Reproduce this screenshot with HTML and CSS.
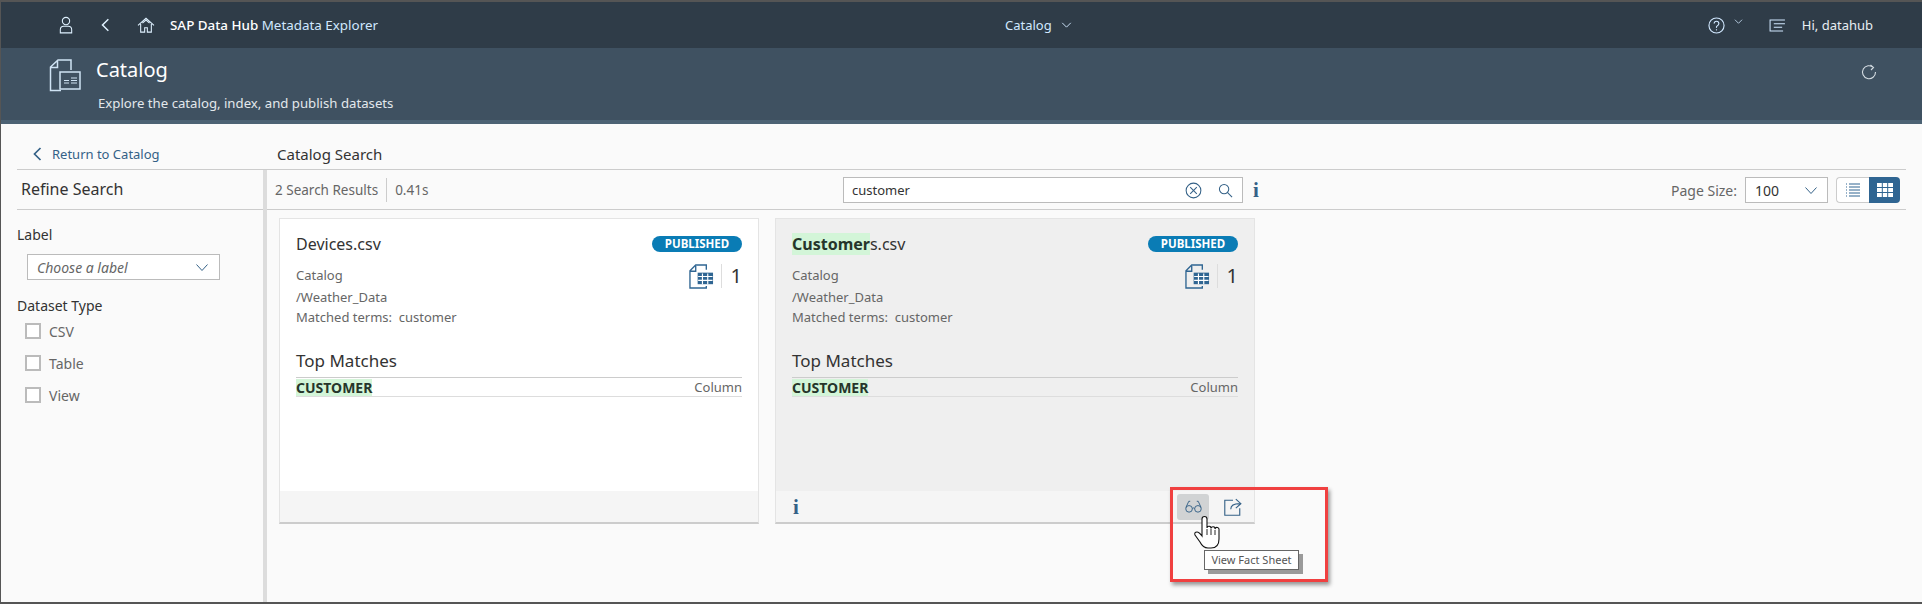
FILE: index.html
```html
<!DOCTYPE html>
<html lang="en">
<head>
    <meta charset="UTF-8">
    <title>SAP Data Hub Metadata Explorer</title>
    <link rel="stylesheet" href="styles.css">
</head>
<body>
<div class="frame">
    <header class="shell">
        <div class="shell-left">
            <svg class="shell-icon user" viewBox="0 0 16 20"><circle cx="8" cy="5.500" r="4.200"/><path d="M1.500 19v-3.500q0-4 4-4h5q4 0 4 4V19z"/></svg>
            <svg class="shell-icon back" viewBox="0 0 12 18"><path d="M10 2L3 9l7 7"/></svg>
            <svg class="shell-icon home" viewBox="0 0 20 18"><path d="M1 9.500L10 1.500l9 8M4 8v9h4.500v-5h3v5H16V8M6 7l4-3.500L14 7"/></svg>
            <span class="shell-title">SAP Data Hub <span class="accent">Metadata Explorer</span></span>
        </div>
        <div class="shell-center">
            <span>Catalog</span>
            <svg class="chev" viewBox="0 0 12 7"><path d="M1 1l5 5 5-5"/></svg>
        </div>
        <div class="shell-right">
            <svg class="help" viewBox="0 0 18 18"><circle cx="9" cy="9" r="8"/><path d="M6.500 7q0-2.500 2.500-2.500T11.500 7q0 1.500-1.500 2.200T9 11.500"/><path d="M9 13v1.200"/></svg>
            <svg class="chev small" viewBox="0 0 12 7"><path d="M1 1l5 5 5-5"/></svg>
            <svg class="notes" viewBox="0 0 18 14"><path d="M2 1H1v12h1M1 1h16M5 5h12M5 9h9M1 13h14"/></svg>
            <span class="hello">Hi, datahub</span>
        </div>
    </header>

    <section class="page-head">
        <svg class="head-icon" viewBox="0 0 32 33"><path d="M22 11V1H9L1.500 8v23.500H12M8.500 2v6.500H2"/><rect x="11" y="13" width="20" height="17" fill="#3f5161"/><path d="M15 21.500h5M22 19h6M22 21.500h6M22 24h6M15 24h5" stroke-width="1.200"/></svg>
        <div class="head-text">
            <h1>Catalog</h1>
            <p>Explore the catalog, index, and publish datasets</p>
        </div>
        <svg class="refresh" viewBox="0 0 16 16"><path d="M12.500 3.500A6.500 6.500 0 1 0 14.500 8M9.500 1l3 2.500L10 6"/></svg>
    </section>

    <div class="crumbs">
        <a class="return">
            <svg viewBox="0 0 9 14"><path d="M8 1L2 7l6 6"/></svg>
            Return to Catalog
        </a>
        <span class="crumb-title">Catalog Search</span>
    </div>

    <div class="body">
        <aside class="side">
            <h2>Refine Search</h2>
            <div class="side-body">
                <div class="side-label">Label</div>
                <div class="combo">
                    <span>Choose a label</span>
                    <svg class="chev-blue" viewBox="0 0 12 7"><path d="M.5.500l5.500 6 5.500-6"/></svg>
                </div>
                <div class="side-label type">Dataset Type</div>
                <label class="check"><i></i>CSV</label>
                <label class="check"><i></i>Table</label>
                <label class="check"><i></i>View</label>
            </div>
        </aside>

        <main class="results">
            <div class="toolbar">
                <div class="counts"><span class="count">2 Search Results</span><span>0.41s</span></div>
                <div class="search-wrap">
                    <div class="search">
                        <span class="search-text">customer</span>
                        <svg class="clear" viewBox="0 0 18 18"><circle cx="9" cy="9" r="7.800"/><path d="M5.500 5.500l7 7M12.500 5.500l-7 7"/></svg>
                        <svg class="glass" viewBox="0 0 16 16"><circle cx="6.500" cy="6.500" r="5"/><path d="M10 10l5 5"/></svg>
                    </div>
                    <span class="info">i</span>
                </div>
                <div class="paging">
                    <span class="page-label">Page Size:</span>
                    <div class="page-select">
                        <span>100</span>
                        <svg class="chev-blue" viewBox="0 0 12 7"><path d="M.5.500l5.500 6 5.500-6"/></svg>
                    </div>
                    <div class="toggle">
                        <span class="toggle-btn">
                            <svg viewBox="0 0 14 14"><path d="M3 1h11M3 4h11M3 7h11M3 10h11M3 13h11M0 1h1M0 4h1M0 7h1M0 10h1M0 13h1"/></svg>
                        </span>
                        <span class="toggle-btn on">
                            <svg viewBox="0 0 16 14"><path d="M0 0h16v14H0z" fill="#fff" stroke="none"/><path d="M0 4.500h16M0 9.500h16M5.300 0v14M10.700 0v14" stroke="#2f6592"/></svg>
                        </span>
                    </div>
                </div>
            </div>

            <div class="cards">
                <article class="card">
                    <div class="card-main">
                        <div class="card-top">
                            <span class="card-name">Devices.csv</span>
                            <span class="badge">PUBLISHED</span>
                        </div>
                        <div class="card-info">
                            <div class="meta">
                                <div class="meta-first">Catalog</div>
                                <div class="meta-path">/Weather_Data</div>
                                <div>Matched terms:&nbsp; customer</div>
                            </div>
                            <div class="stat">
                                <svg class="table-doc" viewBox="0 0 26 26"><path d="M18 6V1H7L1 7v18h17v-2M7 2v5.500H1.500"/><path d="M9 9h16v12H9z" fill="#2f6592" stroke="none"/><path d="M9.500 13h15M9.500 17h15M14 10v11M19.500 10v11" stroke="#fff" stroke-width="1.200"/></svg>
                                <span class="stat-num">1</span>
                            </div>
                        </div>
                        <h3>Top Matches</h3>
                        <div class="match"><mark>CUSTOMER</mark><span>Column</span></div>
                    </div>
                    <div class="card-foot"></div>
                </article>

                <article class="card active">
                    <div class="card-main">
                        <div class="card-top">
                            <span class="card-name"><mark>Customer</mark>s.csv</span>
                            <span class="badge">PUBLISHED</span>
                        </div>
                        <div class="card-info">
                            <div class="meta">
                                <div class="meta-first">Catalog</div>
                                <div class="meta-path">/Weather_Data</div>
                                <div>Matched terms:&nbsp; customer</div>
                            </div>
                            <div class="stat">
                                <svg class="table-doc" viewBox="0 0 26 26"><path d="M18 6V1H7L1 7v18h17v-2M7 2v5.500H1.500"/><path d="M9 9h16v12H9z" fill="#2f6592" stroke="none"/><path d="M9.500 13h15M9.500 17h15M14 10v11M19.500 10v11" stroke="#fff" stroke-width="1.200"/></svg>
                                <span class="stat-num">1</span>
                            </div>
                        </div>
                        <h3>Top Matches</h3>
                        <div class="match"><mark>CUSTOMER</mark><span>Column</span></div>
                    </div>
                    <div class="card-foot">
                        <span class="info foot-info">i</span>
                        <span class="foot-btn hover">
                            <svg viewBox="0 0 18 14"><circle cx="4.300" cy="9.500" r="3.500"/><circle cx="13.700" cy="9.500" r="3.500"/><path d="M7.800 9q1.200-1 2.400 0M1 8L4 1.500h1.500M17 8l-3-6.500h-1.500"/></svg>
                        </span>
                        <span class="foot-btn share">
                            <svg viewBox="0 0 16 16"><path d="M8 2H.7v13.300H14V9M6 10q0-5 8-5M10.500 1L15 5l-4.500 4"/></svg>
                        </span>
                    </div>
                </article>
            </div>
        </main>
    </div>

    <div class="callout"></div>
    <div class="tip">View Fact Sheet</div>
    <svg class="hand" viewBox="0 0 30 35"><path d="M10 4a2.500 2.500 0 0 1 5 0v9a2 2 0 0 1 4 .5 2 2 0 0 1 4 .5 2 2 0 0 1 4 1v9q0 9-8 9h-3q-5 0-8-6l-5-7q-1-3 2-3 2 0 5 4z"/><path d="M15 14v6M19 14v6M23 15v5" stroke-width=".9"/></svg>
</div>
</body>
</html>
```

FILE: styles.css
```css
* {
    box-sizing: border-box;
}

html, body {
    margin: 0;
    padding: 0;
}

body {
    font-family: "Noto Sans", Roboto, Arial, sans-serif;
    color: #333;
    background-color: #fafafa;
}

svg {
    fill: none;
    stroke: currentColor;
    stroke-width: 1.4;
    display: block;
    flex: none;
}

mark {
    background-color: #d3f5d8;
    color: #26352a;
    font-weight: 700;
}

.frame {
    position: relative;
    width: 1922px;
    height: 604px;
    overflow: hidden;
    border-top: 2px solid #555;
    border-bottom: 2px solid #555;
    border-left: 1px solid #555;
    background-color: #fafafa;
}

/* shell bar */
.shell {
    height: 46px;
    background-color: #2f3c48;
    display: flex;
    align-items: center;
    position: relative;
    color: #fff;
}

.shell-left {
    display: flex;
    align-items: center;
    padding-left: 58px;
}

.shell-icon {
    color: #dff1ff;
    stroke-width: 1.2;
}

.user { width: 14px; height: 18px; }
.back { width: 10px; height: 16px; margin-left: 27px; stroke-width: 1.8; }
.home { width: 18px; height: 16px; margin-left: 27px; }

.shell-title {
    margin-left: 15px;
    font-size: 13.4px;
    font-weight: 500;
}

.accent {
    color: #d1e8ff;
    font-weight: 400;
}

.shell-center {
    position: absolute;
    left: 1004px;
    top: 0;
    height: 46px;
    display: flex;
    align-items: center;
    gap: 9px;
    font-size: 13px;
    color: #d1e8ff;
}

.chev { width: 11px; height: 6px; stroke-width: 1.1; }

.shell-right {
    position: absolute;
    right: 49px;
    top: 0;
    height: 46px;
    display: flex;
    align-items: center;
    color: #d1e8ff;
}

.help { width: 17px; height: 17px; margin-right: 9px; stroke-width: 1.2; }
.chev.small { width: 9px; height: 5px; margin-right: 26px; margin-top: -8px; }
.notes { width: 17px; height: 13px; margin-right: 16px; stroke-width: 1.1; }

.hello {
    font-size: 13px;
    color: #e8eef3;
}

/* page header */
.page-head {
    height: 76px;
    background-color: #3f5161;
    border-bottom: 4px solid #4c6274;
    display: flex;
    padding-left: 48px;
    padding-right: 45px;
    color: #fff;
}

.head-icon {
    width: 32px;
    height: 33px;
    margin-top: 11px;
    color: #cfe3f4;
    stroke-width: 1.5;
}

.head-text {
    margin-left: 15px;
    flex: 1;
}

.head-text h1 {
    margin: 9px 0 0;
    font-size: 20px;
    line-height: 26px;
    font-weight: 400;
}

.head-text p {
    margin: 11px 0 0 2px;
    font-size: 13.2px;
    line-height: 18px;
    color: #e3e8ec;
}

.refresh {
    width: 16px;
    height: 16px;
    margin-top: 16px;
    color: #d5dde3;
    stroke-width: 1.1;
}

/* breadcrumb row */
.crumbs {
    height: 46px;
    margin-left: 16px;
    margin-right: 16px;
    padding-top: 20px;
    border-bottom: 1px solid #ccc;
    display: flex;
    align-items: flex-start;
}

.return {
    width: 260px;
    display: flex;
    align-items: center;
    gap: 10px;
    padding-left: 15px;
    font-size: 13px;
    line-height: 20px;
    color: #346187;
}

.return svg {
    width: 10px;
    height: 14px;
    stroke-width: 1.7;
}

.crumb-title {
    font-size: 15px;
    line-height: 20px;
    color: #333;
}

/* sidebar */
.body {
    display: flex;
    height: 433px;
}

.side {
    width: 266px;
    border-right: 4px solid #dcdcdc;
    flex: none;
}

.side h2 {
    margin: 0 0 0 16px;
    height: 40px;
    padding-left: 4px;
    border-bottom: 1px solid #ccc;
    font-size: 16px;
    line-height: 38px;
    font-weight: 400;
    color: #333;
}

.side-body {
    padding-left: 16px;
    padding-top: 15px;
}

.side-label {
    font-size: 14px;
    line-height: 20px;
    color: #333;
}

.side-label.type {
    margin-top: 16px;
    margin-bottom: -1px;
}

.combo {
    width: 193px;
    height: 26px;
    margin: 9px 0 0 10px;
    padding: 0 11px 0 9px;
    border: 1px solid #bbb;
    background-color: #fff;
    display: flex;
    align-items: center;
    justify-content: space-between;
    font-size: 14px;
    font-style: italic;
    color: #666;
}

.chev-blue {
    width: 12px;
    height: 7px;
    color: #346187;
    stroke-width: 1;
}

.check {
    height: 32px;
    margin-left: 8px;
    display: flex;
    align-items: center;
    gap: 8px;
    font-size: 14px;
    color: #666;
}

.check i {
    width: 16px;
    height: 16px;
    border: 2px solid #bbb;
    background-color: #fff;
}

/* results */
.results {
    flex: 1;
    min-width: 0;
    padding-right: 16px;
}

.toolbar {
    height: 40px;
    border-bottom: 1px solid #ccc;
    display: flex;
    align-items: center;
    position: relative;
    padding-left: 8px;
    font-size: 13.5px;
    color: #666;
}

.counts {
    display: flex;
    align-items: center;
}

.count {
    padding-right: 8px;
    margin-right: 8px;
    border-right: 1px solid #ccc;
    line-height: 24px;
}

.search-wrap {
    position: absolute;
    left: 576px;
    top: 7px;
    display: flex;
    align-items: center;
    gap: 10px;
}

.search {
    width: 400px;
    height: 26px;
    border: 1px solid #bbb;
    background-color: #fff;
    display: flex;
    align-items: center;
    padding: 0 9px 0 8px;
    color: #346187;
}

.search-text {
    flex: 1;
    font-size: 13px;
    color: #333;
}

.clear { width: 17px; height: 17px; stroke-width: 1.1; margin-right: 16px; }
.glass { width: 15px; height: 15px; stroke-width: 1.1; }

.info {
    font-family: "Liberation Serif", serif;
    font-size: 21px;
    line-height: 24px;
    font-weight: 700;
    color: #346187;
}

.paging {
    position: absolute;
    right: 6px;
    top: 7px;
    display: flex;
    align-items: center;
}

.page-label {
    margin-right: 8px;
    font-size: 14px;
}

.page-select {
    width: 83px;
    height: 26px;
    border: 1px solid #bbb;
    background-color: #fff;
    display: flex;
    align-items: center;
    justify-content: space-between;
    padding: 0 10px 0 9px;
    margin-right: 8px;
    font-size: 14px;
    color: #333;
}

.toggle {
    display: flex;
    height: 26px;
}

.toggle-btn {
    width: 33px;
    display: flex;
    align-items: center;
    justify-content: center;
    border: 1px solid #ccc;
    border-right: none;
    border-radius: 4px 0 0 4px;
    background-color: #fff;
    color: #2f6592;
}

.toggle-btn svg {
    width: 14px;
    height: 14px;
    stroke-width: 1;
}

.toggle-btn.on {
    width: 31px;
    border: none;
    border-radius: 0 4px 4px 0;
    background-color: #2f6592;
}

.toggle-btn.on svg {
    width: 16px;
}

/* cards */
.cards {
    display: flex;
    gap: 16px;
    padding: 8px 0 0 12px;
}

.card {
    width: 480px;
    height: 306px;
    background-color: #fff;
    border: 1px solid #e4e4e4;
    border-bottom: 2px solid #ccc;
    display: flex;
    flex-direction: column;
}

.card.active {
    background-color: #efefef;
}

.card-main {
    flex: 1;
    padding: 12px 16px 0;
}

.card-top {
    display: flex;
    justify-content: space-between;
    align-items: center;
    height: 26px;
}

.card-name {
    font-size: 16px;
    line-height: 26px;
    color: #333;
}

.badge {
    width: 90px;
    height: 16px;
    border-radius: 8px;
    background-color: #0a7cb5;
    color: #fff;
    font-size: 11.5px;
    line-height: 16px;
    font-weight: 700;
    text-align: center;
}

.card-info {
    display: flex;
    justify-content: space-between;
    margin-top: 8px;
}

.meta {
    font-size: 13px;
    line-height: 20px;
    color: #666;
}

.meta-path {
    margin-top: 2px;
}

.stat {
    display: flex;
    align-items: center;
    height: 26px;
    margin-top: -2px;
}

.table-doc {
    width: 25px;
    height: 25px;
    color: #2f6592;
    stroke-width: 1.4;
}

.stat-num {
    margin-left: 7px;
    padding-left: 9px;
    border-left: 1px solid #ddd;
    font-size: 20px;
    line-height: 24px;
    color: #333;
}

h3 {
    margin: 20px 0 0;
    font-size: 17px;
    line-height: 28px;
    font-weight: 400;
    color: #333;
    border-bottom: 1px solid #ccc;
    padding-bottom: 2px;
}

.match {
    display: flex;
    justify-content: space-between;
    align-items: center;
    height: 19px;
    border-bottom: 1px solid #ddd;
    font-size: 13px;
    color: #666;
}

.match mark {
    font-size: 14px;
    line-height: 17px;
}

.card-foot {
    height: 31px;
    background-color: #f5f5f5;
    display: flex;
    align-items: center;
    padding-left: 17px;
}

.foot-info {
    margin-right: auto;
}

.foot-btn {
    width: 32px;
    height: 26px;
    border-radius: 3px;
    display: flex;
    align-items: center;
    justify-content: center;
    color: #346187;
}

.foot-btn.hover {
    background-color: #d1d3d4;
    margin-right: 8px;
}

.foot-btn.share {
    margin-right: 5px;
}

.foot-btn svg {
    width: 17px;
    height: 15px;
    stroke-width: 1;
}

.foot-btn.share svg {
    width: 18px;
    height: 18px;
}

/* things lying over the cards */
.callout {
    position: absolute;
    left: 1169px;
    top: 485px;
    width: 158px;
    height: 95px;
    border: 3px solid #f04040;
    box-shadow: 2px 3px 4px rgba(0, 0, 0, 0.4);
}

.tip {
    position: absolute;
    left: 1203px;
    top: 548px;
    width: 95px;
    height: 20px;
    border: 1px solid #666;
    background-color: #fff;
    box-shadow: 4px 4px 0 #9a9a9a;
    font-size: 11px;
    line-height: 18px;
    text-align: center;
    color: #555;
}

.hand {
    position: absolute;
    left: 1191px;
    top: 513px;
    width: 30px;
    height: 35px;
    fill: #fff;
    color: #111;
    stroke-width: 1.1;
}
```
